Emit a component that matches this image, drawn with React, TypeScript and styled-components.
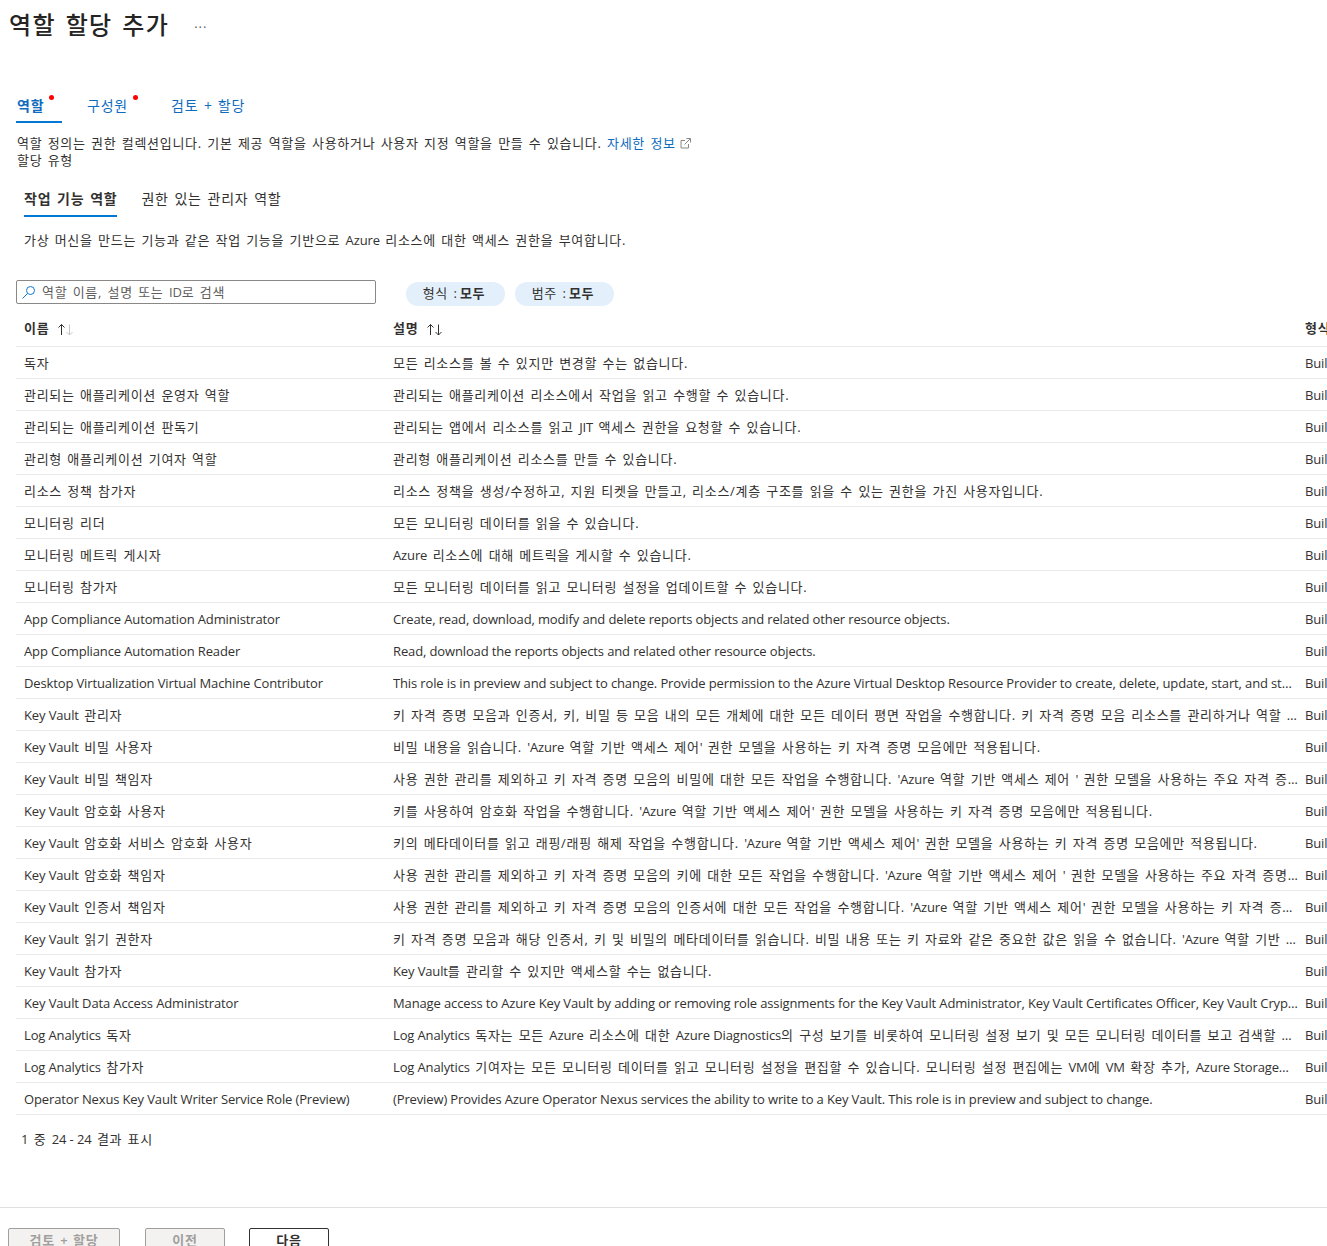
import React from "react";
import styled, { createGlobalStyle } from "styled-components";

const FONT = `"Open Sans", "Noto Sans CJK KR", sans-serif`;

const Global = createGlobalStyle`
  html, body { margin: 0; padding: 0; background: #fff; overflow: hidden; }
  body { font-family: ${FONT}; font-size: 13px; color: #323130; }
  * { box-sizing: border-box; }
`;

const Ko = styled.span`
  letter-spacing: 0.054em;
  word-spacing: 0.1em;
`;

const KO_RUN = / ?[가-힣]+[.,/]?(?: +[가-힣]+[.,/]?)* ?/g;

const T = ({ children }: { children: string }) => {
  const out: React.ReactNode[] = [];
  let last = 0;
  for (const m of children.matchAll(KO_RUN)) {
    if (m.index > last) out.push(children.slice(last, m.index));
    out.push(<Ko key={m.index}>{m[0]}</Ko>);
    last = m.index + m[0].length;
  }
  if (last < children.length) out.push(children.slice(last));
  return <>{out}</>;
};

const Page = styled.div`
  width: 1327px;
  height: 1246px;
  overflow: hidden;
  display: flex;
  flex-direction: column;
  letter-spacing: -0.01em;
  & > * { flex: none; }
`;
const Header = styled.header`
  height: 97px;
  padding: 6px 0 0 9px;
  display: flex;
  align-items: flex-start;
  gap: 25px;
`;
const Title = styled.h1`
  margin: 0;
  font-size: 24px;
  line-height: 38px;
  font-weight: 500;
  color: #252423;
`;
const More = styled.span`
  font-size: 13px;
  line-height: 38px;
  padding-top: 2px;
  color: #605e5c;
  letter-spacing: 1px;
`;
const Content = styled.main`
  padding-left: 16px;
  display: flex;
  flex-direction: column;
  & > * { flex: none; }
`;
const Wizard = styled.nav`
  display: flex;
  gap: 24px;
  height: 26px;
`;
const WizardTab = styled.div<{ $active?: boolean; $wide: number }>`
  position: relative;
  height: 26px;
  padding: 0 1px;
  width: ${(p) => p.$wide}px;
  color: #0f6cbd;
  font-size: 14px;
  line-height: 17px;
  font-weight: ${(p) => (p.$active ? 600 : 400)};
  border-bottom: 2px solid ${(p) => (p.$active ? "#0078d4" : "transparent")};
`;
const Dot = styled.span<{ $x: number }>`
  position: absolute;
  top: -2px;
  left: ${(p) => p.$x}px;
  width: 5px;
  height: 5px;
  border-radius: 50%;
  background: #f00;
`;
const Intro = styled.div`
  margin-top: 12px;
  padding-left: 1px;
  line-height: 17px;
  color: #323130;
`;
const Link = styled.a`
  color: #0f6cbd;
`;
const ExtIcon = styled.svg`
  width: 11px;
  height: 11px;
  margin-left: 4px;
  vertical-align: -1px;
`;
const SubTabs = styled.div`
  display: flex;
  gap: 24px;
  margin: 16px 0 0 8px;
  height: 32px;
`;
const SubTab = styled.div<{ $active?: boolean }>`
  font-size: 14px;
  line-height: 20px;
  padding-top: 4px;
  font-weight: ${(p) => (p.$active ? 600 : 400)};
  border-bottom: 2px solid ${(p) => (p.$active ? "#0078d4" : "transparent")};
`;
const SubDesc = styled.p`
  margin: 14px 0 0 8px;
  line-height: 18px;
`;
const Filters = styled.div`
  display: flex;
  align-items: flex-start;
  margin-top: 31px;
  height: 32px;
`;
const Search = styled.div`
  width: 360px;
  height: 24px;
  border: 1px solid #8a8886;
  border-radius: 2px;
  display: flex;
  align-items: center;
  gap: 6px;
  padding-left: 4px;
  color: #605e5c;
  line-height: 18px;
`;
const Pills = styled.div`
  display: flex;
  gap: 10px;
  margin: 2px 0 0 30px;
`;
const Pill = styled.div`
  width: 99px;
  height: 24px;
  border-radius: 12px;
  background: #e3f0fb;
  text-align: center;
  line-height: 23px;
  padding-right: 3px;
  color: #323130;
  font-size: 13px;
  b { font-weight: 600; }
`;
const Row = styled.div<{ $head?: boolean }>`
  display: grid;
  grid-template-columns: 369px 912px 200px;
  width: 1489px;
  height: ${(p) => (p.$head ? 35 : 32)}px;
  padding-bottom: ${(p) => (p.$head ? 2 : 0)}px;
  align-items: center;
  padding-left: 8px;
  border-bottom: 1px solid #edebe9;
  font-size: 13px;
  font-weight: ${(p) => (p.$head ? 600 : 400)};
`;
const Cell = styled.div`
  white-space: nowrap;
  overflow: hidden;
  text-overflow: ellipsis;
  padding-right: 6px;
  line-height: 18px;
`;
const Sort = styled.svg`
  width: 18px;
  height: 13px;
  margin-left: 8px;
  vertical-align: -3px;
`;
const Count = styled.div`
  margin: 15px 0 0 5px;
  line-height: 18px;
  height: 50px;
`;
const Footer = styled.footer`
  margin-top: 27px;
  border-top: 1px solid #e1dfdd;
  padding: 20px 0 0 8px;
  display: flex;
  gap: 24px;
`;
const Button = styled.button<{ $w: number; $primary?: boolean; $after?: number }>`
  width: ${(p) => p.$w}px;
  height: 24px;
  margin-right: ${(p) => p.$after ?? 0}px;
  border: 1px solid ${(p) => (p.$primary ? "#323130" : "#a19f9d")};
  border-radius: 2px;
  background: ${(p) => (p.$primary ? "#fff" : "#f3f2f1")};
  color: ${(p) => (p.$primary ? "#323130" : "#a19f9d")};
  font-family: ${FONT};
  font-size: 13px;
  font-weight: 600;
  padding: 0;
  line-height: 18px;
`;

const Arrows = ({ dim }: { dim?: boolean }) => (
  <Sort viewBox="0 0 18 13" fill="none">
    <path d="M4.5 12V1.5M1.5 4.5l3-3 3 3" stroke="#323130" strokeWidth="1" />
    <path d="M12.5 1.5V12M9.5 9l3 3 3-3" stroke={dim ? "#c8c6c4" : "#323130"} strokeWidth="1" />
  </Sort>
);

const rows: [string, string][] = [
  ["독자", "모든 리소스를 볼 수 있지만 변경할 수는 없습니다."],
  ["관리되는 애플리케이션 운영자 역할", "관리되는 애플리케이션 리소스에서 작업을 읽고 수행할 수 있습니다."],
  ["관리되는 애플리케이션 판독기", "관리되는 앱에서 리소스를 읽고 JIT 액세스 권한을 요청할 수 있습니다."],
  ["관리형 애플리케이션 기여자 역할", "관리형 애플리케이션 리소스를 만들 수 있습니다."],
  ["리소스 정책 참가자", "리소스 정책을 생성/수정하고, 지원 티켓을 만들고, 리소스/계층 구조를 읽을 수 있는 권한을 가진 사용자입니다."],
  ["모니터링 리더", "모든 모니터링 데이터를 읽을 수 있습니다."],
  ["모니터링 메트릭 게시자", "Azure 리소스에 대해 메트릭을 게시할 수 있습니다."],
  ["모니터링 참가자", "모든 모니터링 데이터를 읽고 모니터링 설정을 업데이트할 수 있습니다."],
  ["App Compliance Automation Administrator", "Create, read, download, modify and delete reports objects and related other resource objects."],
  ["App Compliance Automation Reader", "Read, download the reports objects and related other resource objects."],
  ["Desktop Virtualization Virtual Machine Contributor", "This role is in preview and subject to change. Provide permission to the Azure Virtual Desktop Resource Provider to create, delete, update, start, and stop virtual machines."],
  ["Key Vault 관리자", "키 자격 증명 모음과 인증서, 키, 비밀 등 모음 내의 모든 개체에 대한 모든 데이터 평면 작업을 수행합니다. 키 자격 증명 모음 리소스를 관리하거나 역할 할당을 관리할 수 없습니다."],
  ["Key Vault 비밀 사용자", "비밀 내용을 읽습니다. 'Azure 역할 기반 액세스 제어' 권한 모델을 사용하는 키 자격 증명 모음에만 적용됩니다."],
  ["Key Vault 비밀 책임자", "사용 권한 관리를 제외하고 키 자격 증명 모음의 비밀에 대한 모든 작업을 수행합니다. 'Azure 역할 기반 액세스 제어 ' 권한 모델을 사용하는 주요 자격 증명 모음에만 적용됩니다."],
  ["Key Vault 암호화 사용자", "키를 사용하여 암호화 작업을 수행합니다. 'Azure 역할 기반 액세스 제어' 권한 모델을 사용하는 키 자격 증명 모음에만 적용됩니다."],
  ["Key Vault 암호화 서비스 암호화 사용자", "키의 메타데이터를 읽고 래핑/래핑 해제 작업을 수행합니다. 'Azure 역할 기반 액세스 제어' 권한 모델을 사용하는 키 자격 증명 모음에만 적용됩니다."],
  ["Key Vault 암호화 책임자", "사용 권한 관리를 제외하고 키 자격 증명 모음의 키에 대한 모든 작업을 수행합니다. 'Azure 역할 기반 액세스 제어 ' 권한 모델을 사용하는 주요 자격 증명 모음에만 적용됩니다."],
  ["Key Vault 인증서 책임자", "사용 권한 관리를 제외하고 키 자격 증명 모음의 인증서에 대한 모든 작업을 수행합니다. 'Azure 역할 기반 액세스 제어' 권한 모델을 사용하는 키 자격 증명 모음에만 적용됩니다."],
  ["Key Vault 읽기 권한자", "키 자격 증명 모음과 해당 인증서, 키 및 비밀의 메타데이터를 읽습니다. 비밀 내용 또는 키 자료와 같은 중요한 값은 읽을 수 없습니다. 'Azure 역할 기반 액세스 제어' 권한 모델을 사용합니다."],
  ["Key Vault 참가자", "Key Vault를 관리할 수 있지만 액세스할 수는 없습니다."],
  ["Key Vault Data Access Administrator", "Manage access to Azure Key Vault by adding or removing role assignments for the Key Vault Administrator, Key Vault Certificates Officer, Key Vault Crypto Officer, and more."],
  ["Log Analytics 독자", "Log Analytics 독자는 모든 Azure 리소스에 대한 Azure Diagnostics의 구성 보기를 비롯하여 모니터링 설정 보기 및 모든 모니터링 데이터를 보고 검색할 수 있습니다."],
  ["Log Analytics 참가자", "Log Analytics 기여자는 모든 모니터링 데이터를 읽고 모니터링 설정을 편집할 수 있습니다. 모니터링 설정 편집에는 VM에 VM 확장 추가, Azure Storage에서 로그 수집 구성이 포함됩니다."],
  ["Operator Nexus Key Vault Writer Service Role (Preview)", "(Preview) Provides Azure Operator Nexus services the ability to write to a Key Vault. This role is in preview and subject to change."],
];

export default function App() {
  return (
    <Page>
      <Global />
      <Header>
        <Title><T>역할 할당 추가</T></Title>
        <More>···</More>
      </Header>
      <Content>
        <Wizard>
          <WizardTab $active $wide={46}>
            <T>역할</T>
            <Dot $x={33} />
          </WizardTab>
          <WizardTab $wide={60}>
            <T>구성원</T>
            <Dot $x={47} />
          </WizardTab>
          <WizardTab $wide={90}><T>검토 + 할당</T></WizardTab>
        </Wizard>
        <Intro>
          <T>역할 정의는 권한 컬렉션입니다. 기본 제공 역할을 사용하거나 사용자 지정 역할을 만들 수 있습니다. </T>
          <Link><T>자세한 정보</T></Link>
          <ExtIcon viewBox="0 0 11 11" fill="none" stroke="#8a8886" strokeWidth="1">
            <path d="M5 2.5H1v7.5h7.5V6M6.5 .5h4v4M10.5 .5 4.5 6.5" />
          </ExtIcon>
          <br />
          <T>할당 유형</T>
        </Intro>
        <SubTabs>
          <SubTab $active><T>작업 기능 역할</T></SubTab>
          <SubTab><T>권한 있는 관리자 역할</T></SubTab>
        </SubTabs>
        <SubDesc><T>가상 머신을 만드는 기능과 같은 작업 기능을 기반으로 Azure 리소스에 대한 액세스 권한을 부여합니다.</T></SubDesc>
        <Filters>
          <Search>
            <svg width="15" height="15" viewBox="0 0 15 15" fill="none" stroke="#0f78d4" strokeWidth="1">
              <circle cx="9.5" cy="5.5" r="4" />
              <path d="M6.5 8.5 1.5 13.5" />
            </svg>
            <span><T>역할 이름, 설명 또는 ID로 검색</T></span>
          </Search>
          <Pills>
            <Pill><T>형식 : </T><b><T>모두</T></b></Pill>
            <Pill><T>범주 : </T><b><T>모두</T></b></Pill>
          </Pills>
        </Filters>
        <Row $head>
          <Cell><T>이름</T><Arrows dim /></Cell>
          <Cell><T>설명</T><Arrows /></Cell>
          <Cell><T>형식</T></Cell>
        </Row>
        {rows.map(([name, desc]) => (
          <Row key={name}>
            <Cell><T>{name}</T></Cell>
            <Cell><T>{desc}</T></Cell>
            <Cell>BuiltInRole</Cell>
          </Row>
        ))}
        <Count><T>1 중 24 - 24 결과 표시</T></Count>
      </Content>
      <Footer>
        <Button $w={112} $after={1}><T>검토 + 할당</T></Button>
        <Button $w={80}><T>이전</T></Button>
        <Button $w={80} $primary><T>다음</T></Button>
      </Footer>
    </Page>
  );
}
